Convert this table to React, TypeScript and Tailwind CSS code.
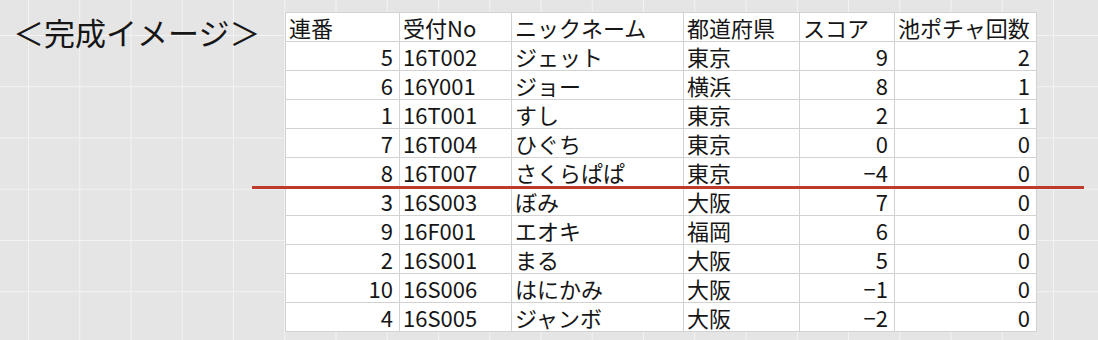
const columns = [
  { label: "連番", width: "w-[114px]", right: true },
  { label: "受付No", width: "w-[112px]", right: false },
  { label: "ニックネーム", width: "w-[172px]", right: false },
  { label: "都道府県", width: "w-[116px]", right: false },
  { label: "スコア", width: "w-[95px]", right: true },
  { label: "池ポチャ回数", width: "w-[142px]", right: true },
];

const rows: (string | number)[][] = [
  [5, "16T002", "ジェット", "東京", 9, 2],
  [6, "16Y001", "ジョー", "横浜", 8, 1],
  [1, "16T001", "すし", "東京", 2, 1],
  [7, "16T004", "ひぐち", "東京", 0, 0],
  [8, "16T007", "さくらぱぱ", "東京", -4, 0],
  [3, "16S003", "ぼみ", "大阪", 7, 0],
  [9, "16F001", "エオキ", "福岡", 6, 0],
  [2, "16S001", "まる", "大阪", 5, 0],
  [10, "16S006", "はにかみ", "大阪", -1, 0],
  [4, "16S005", "ジャンボ", "大阪", -2, 0],
];

function fmt(v: string | number) {
  if (typeof v === "number" && v < 0) return "−" + Math.abs(v);
  return String(v);
}

export default function App() {
  return (
    <div className="relative w-[1098px] h-[340px] overflow-hidden bg-[#e5e5e5] bg-[linear-gradient(to_right,#f3f3f3_1px,transparent_1px),linear-gradient(to_bottom,#f3f3f3_1px,transparent_1px)] bg-size-[51.25px_51.25px] bg-position-[28px_35px] font-['Noto_Sans_CJK_JP',sans-serif] text-[#161616]">
      <div className="flex items-start pt-[12px]">
        <div className="w-[285px] pl-[13px] text-[31px] leading-[40px] whitespace-nowrap">
          ＜完成イメージ＞
        </div>

        <div className="border-t border-l border-[#d2d2d2] bg-white text-[22px] leading-[28px]">
          <div className="flex">
            {columns.map((c) => (
              <div
                key={c.label}
                className={`${c.width} h-[29px] flex items-center border-r border-b border-[#d2d2d2] pl-[3px] whitespace-nowrap`}
              >
                {c.label}
              </div>
            ))}
          </div>
          {rows.map((r, i) => (
            <div key={i} className="flex">
              {r.map((v, j) => (
                <div
                  key={j}
                  className={`${columns[j].width} h-[29px] flex items-center border-r border-b border-[#d2d2d2] whitespace-nowrap ${
                    columns[j].right ? "justify-end pr-[6px]" : "pl-[3px]"
                  }`}
                >
                  {fmt(v)}
                </div>
              ))}
            </div>
          ))}
        </div>
      </div>

      {/* red divider over the table */}
      <div className="absolute left-[252px] top-[186px] w-[832px] h-[3px] bg-[#bd3a2c]" />
    </div>
  );
}
